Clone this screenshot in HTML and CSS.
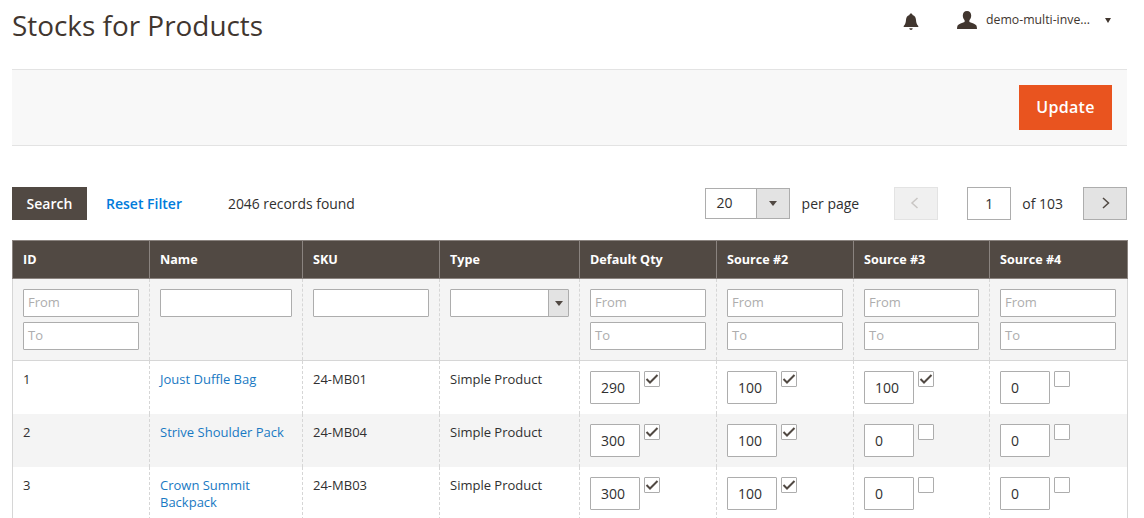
FILE: index.html
```html
<!DOCTYPE html>
<html lang="en">
<head>
<meta charset="utf-8">
<title>Stocks for Products</title>
<link rel="stylesheet" href="styles.css">
</head>
<body>
<div class="page">
  <header class="top">
    <h1 class="title">Stocks for Products</h1>
    <div class="user-area">
      <svg class="bell" viewBox="0 0 16 18" width="16" height="18"><path d="M8 0.5c.9 0 1.5.6 1.5 1.4 2.4.7 3.3 2.6 3.5 5 .2 2.6.6 4.300 2.300 6.100v1H.7v-1C2.400 11.200 2.800 9.500 3 6.900c.2-2.400 1.100-4.300 3.500-5C6.500 1.100 7.100.5 8 .5z" fill="#41362f"/><path d="M6.300 15.300h3.400C9.600 16.300 8.900 17 8 17s-1.600-.7-1.700-1.700z" fill="#41362f"/></svg>
      <svg class="person" viewBox="0 0 20 18" width="20" height="18"><path d="M10 0c2.700 0 4.200 1.900 4.200 4.500 0 2-.8 3.700-1.800 4.800v1.700c2.500 1 6 1.800 7 3.500.4.800.5 2 .6 3.500H0c.1-1.500.2-2.700.6-3.500 1-1.700 4.500-2.500 7-3.500V9.300C6.600 8.200 5.800 6.500 5.800 4.500 5.800 1.900 7.300 0 10 0z" fill="#41362f"/></svg>
      <span class="user-name">demo-multi-inve...</span>
      <span class="caret-dark"></span>
    </div>
  </header>

  <div class="action-bar">
    <button class="update" type="button">Update</button>
  </div>

  <div class="toolbar">
    <button class="search" type="button">Search</button>
    <a class="reset" href="#">Reset Filter</a>
    <span class="records">2046 records found</span>
    <div class="pager">
      <div class="per-select"><span class="per-value">20</span><span class="select-btn"><span class="caret"></span></span></div>
      <span class="per-label">per page</span>
      <button class="page-btn prev" type="button"><svg viewBox="0 0 14 14" width="14" height="14"><path d="M8.500 1 3 6l5.500 5" fill="none" stroke="#c9c6c4" stroke-width="1.500"/></svg></button>
      <span class="page-input">1</span>
      <span class="page-total">of 103</span>
      <button class="page-btn next" type="button"><svg viewBox="0 0 14 14" width="14" height="14"><path d="M5 1l5.500 5L5 11" fill="none" stroke="#514943" stroke-width="1.500"/></svg></button>
    </div>
  </div>

  <table class="grid">
    <colgroup>
      <col class="c-id"><col class="c-name"><col class="c-sku"><col class="c-type">
      <col class="c-src"><col class="c-src"><col class="c-src3"><col class="c-src4">
    </colgroup>
    <thead>
      <tr class="head">
        <th>ID</th><th>Name</th><th>SKU</th><th>Type</th><th>Default Qty</th><th>Source #2</th><th>Source #3</th><th>Source #4</th>
      </tr>
      <tr class="filters">
        <td><div class="fbox">From</div><div class="fbox">To</div></td>
        <td><div class="fbox"></div></td>
        <td><div class="fbox"></div></td>
        <td><div class="fbox fselect"><span class="select-btn"><span class="caret"></span></span></div></td>
        <td><div class="fbox">From</div><div class="fbox">To</div></td>
        <td><div class="fbox">From</div><div class="fbox">To</div></td>
        <td><div class="fbox">From</div><div class="fbox">To</div></td>
        <td><div class="fbox">From</div><div class="fbox">To</div></td>
      </tr>
    </thead>
    <tbody>
      <tr>
        <td>1</td><td><a href="#">Joust Duffle Bag</a></td><td>24-MB01</td><td>Simple Product</td>
        <td><div class="qty"><span class="qbox">290</span><span class="cb on"><svg viewBox="0 0 14 12" width="14" height="12"><path d="M1.500 6 5 9.500 12.500 2" fill="none" stroke="#514943" stroke-width="2"/></svg></span></div></td>
        <td><div class="qty"><span class="qbox">100</span><span class="cb on"><svg viewBox="0 0 14 12" width="14" height="12"><path d="M1.500 6 5 9.500 12.500 2" fill="none" stroke="#514943" stroke-width="2"/></svg></span></div></td>
        <td><div class="qty"><span class="qbox">100</span><span class="cb on"><svg viewBox="0 0 14 12" width="14" height="12"><path d="M1.500 6 5 9.500 12.500 2" fill="none" stroke="#514943" stroke-width="2"/></svg></span></div></td>
        <td><div class="qty"><span class="qbox">0</span><span class="cb"></span></div></td>
      </tr>
      <tr class="alt">
        <td>2</td><td><a href="#">Strive Shoulder Pack</a></td><td>24-MB04</td><td>Simple Product</td>
        <td><div class="qty"><span class="qbox">300</span><span class="cb on"><svg viewBox="0 0 14 12" width="14" height="12"><path d="M1.500 6 5 9.500 12.500 2" fill="none" stroke="#514943" stroke-width="2"/></svg></span></div></td>
        <td><div class="qty"><span class="qbox">100</span><span class="cb on"><svg viewBox="0 0 14 12" width="14" height="12"><path d="M1.500 6 5 9.500 12.500 2" fill="none" stroke="#514943" stroke-width="2"/></svg></span></div></td>
        <td><div class="qty"><span class="qbox">0</span><span class="cb"></span></div></td>
        <td><div class="qty"><span class="qbox">0</span><span class="cb"></span></div></td>
      </tr>
      <tr>
        <td>3</td><td><a href="#">Crown Summit Backpack</a></td><td>24-MB03</td><td>Simple Product</td>
        <td><div class="qty"><span class="qbox">300</span><span class="cb on"><svg viewBox="0 0 14 12" width="14" height="12"><path d="M1.500 6 5 9.500 12.500 2" fill="none" stroke="#514943" stroke-width="2"/></svg></span></div></td>
        <td><div class="qty"><span class="qbox">100</span><span class="cb on"><svg viewBox="0 0 14 12" width="14" height="12"><path d="M1.500 6 5 9.500 12.500 2" fill="none" stroke="#514943" stroke-width="2"/></svg></span></div></td>
        <td><div class="qty"><span class="qbox">0</span><span class="cb"></span></div></td>
        <td><div class="qty"><span class="qbox">0</span><span class="cb"></span></div></td>
      </tr>
    </tbody>
  </table>
</div>
</body>
</html>
```
FILE: styles.css
```css
* { box-sizing: border-box; }
html, body { margin: 0; padding: 0; height: 518px; overflow: hidden; background: #fff; }
body { font-family: "Open Sans", sans-serif; font-size: 14px; color: #303030; -webkit-font-smoothing: antialiased; }
.page { width: 1144px; padding: 0 17px 0 12px; }

.top { display: flex; align-items: flex-start; justify-content: space-between; height: 69px; }
.title { margin: 6px 0 0; font-size: 27.900px; font-weight: 400; line-height: 38px; color: #41362f; }
.user-area { display: flex; align-items: center; margin-top: 11px; height: 18px; color: #41362f; }
.bell { margin: 3px 38px 0 0; }
.person { margin-right: 9px; }
.user-name { font-size: 12.300px; line-height: 18px; margin-right: 15px; }
.caret-dark { width: 0; height: 0; border: 3.500px solid transparent; border-top: 5px solid #41362f; border-bottom: 0; margin: 1px 16px 0 0; }

.action-bar { display: flex; justify-content: flex-end; align-items: flex-start; height: 77px; padding: 15px 15px 0 0; background: #f8f8f8; border-top: 1px solid #e3e3e3; border-bottom: 1px solid #e3e3e3; }
.update { width: 93px; height: 45px; border: 0; padding: 0 0 1px; background: #e9541f; color: #fff; font-family: inherit; font-size: 16px; font-weight: 600; letter-spacing: .3px; }

.toolbar { display: flex; align-items: center; height: 33px; margin-top: 41px; }
.search { width: 75px; height: 33px; border: 0; padding: 0; background: #514943; color: #fff; font-family: inherit; font-size: 14px; font-weight: 600; }
.reset { margin-left: 19px; color: #007bdb; font-weight: 600; text-decoration: none; }
.records { margin-left: 46px; font-size: 13.900px; }
.pager { display: flex; align-items: center; margin-left: auto; }
.per-select { display: flex; width: 85px; height: 31px; border: 1px solid #adadad; background: #fff; }
.per-value { flex: 1; padding-left: 11px; line-height: 28px; }
.select-btn { display: flex; align-items: center; justify-content: center; width: 33px; height: 100%; background: #e3e3e3; border-left: 1px solid #adadad; }
.caret { width: 0; height: 0; border: 4px solid transparent; border-top: 5px solid #514943; border-bottom: 0; }
.per-label { margin-left: 12px; }
.page-btn { display: flex; align-items: center; justify-content: center; width: 44px; height: 33px; padding: 0; }
.prev { margin-left: 35px; background: #f0f0f0; border: 1px solid #e3e3e3; }
.next { margin-left: 20px; background: #e3e3e3; border: 1px solid #adadad; }
.page-input { width: 44px; height: 33px; margin-left: 29px; border: 1px solid #adadad; text-align: center; line-height: 31px; }
.page-total { margin-left: 11px; }

.grid { width: 1115px; margin-top: 20px; table-layout: fixed; border-collapse: collapse; }
.c-id { width: 137px; }
.c-name { width: 153px; }
.c-sku { width: 137px; }
.c-type { width: 140px; }
.c-src { width: 137px; }
.c-src3 { width: 136px; }
.c-src4 { width: 138px; }
.grid th { height: 38px; padding: 0 10px 1px; background: #514943; color: #fff; font-size: 12.600px; font-weight: 700; text-align: left; border: 1px solid #8a837f; }
.grid td { vertical-align: top; border-left: 1px dashed #d6d6d6; border-right: 1px dashed #d6d6d6; padding: 0 10px; font-size: 13px; line-height: 17px; }
.grid td:first-child { border-left: 1px solid #d6d6d6; }
.grid td:last-child { border-right: 1px solid #d6d6d6; padding-right: 11px; }
.filters td { height: 82px; padding-top: 10px; background: #f4f4f4; border-bottom: 1px solid #d6d6d6; }
.fbox { height: 28px; margin-bottom: 5px; padding-left: 4px; background: #fff; border: 1px solid #adadad; border-radius: 1px; color: #adadad; line-height: 24px; font-size: 13px; }
.fselect { display: flex; justify-content: flex-end; padding: 0; }
.fselect .select-btn { width: 20px; }
tbody tr { height: 53px; }
tbody td { padding-top: 10px !important; }
.alt td { background: #f4f4f4; }
.grid a { color: #1979c3; text-decoration: none; }
.qty { display: flex; align-items: flex-start; gap: 4px; }
.qbox { width: 50px; height: 33px; padding-left: 10px; background: #fff; border: 1px solid #adadad; border-radius: 1px; font-size: 14px; line-height: 31px; color: #303030; }
.cb { display: flex; align-items: center; justify-content: center; width: 16px; height: 16px; background: #fff; border: 1px solid #adadad; border-radius: 1px; }
```
